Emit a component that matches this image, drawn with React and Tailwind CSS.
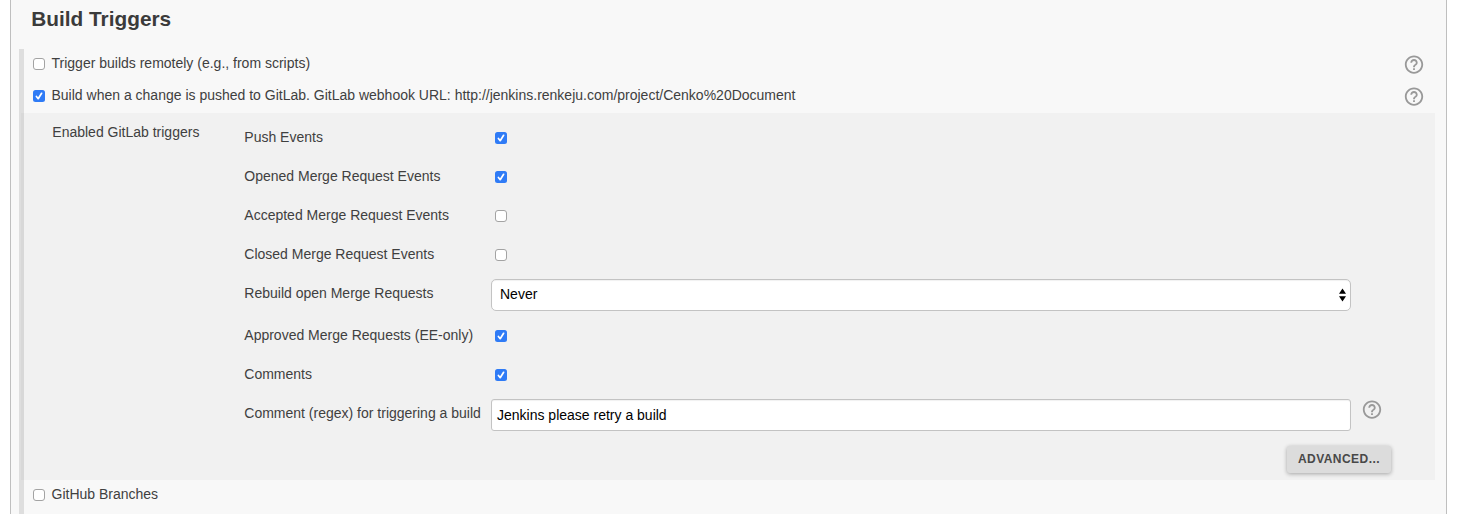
import React from "react";

function Check({ on }) {
  return (
    <span
      role="checkbox"
      aria-checked={on}
      className={
        on
          ? "block h-3 w-3 shrink-0 rounded-[2.5px] bg-[#2f7bf6]"
          : "block h-3 w-3 shrink-0 rounded-[3px] border border-[#a3a3a3] bg-white"
      }
    >
      {on && (
        <svg viewBox="0 0 12 12" className="block h-3 w-3" fill="none" stroke="#fff" strokeWidth="1.7" strokeLinecap="round" strokeLinejoin="round">
          <path d="M3.4 6.5 5.2 8.7 8.6 3.3" />
        </svg>
      )}
    </span>
  );
}

function Help() {
  return (
    <svg viewBox="0 0.5 24 24" className="block h-[22px] w-[22px] shrink-0" fill="#999">
      <path d="M11 18h2v-2h-2v2zm1-16C6.48 2 2 6.48 2 12s4.48 10 10 10 10-4.48 10-10S17.52 2 12 2zm0 18c-4.41 0-8-3.59-8-8s3.59-8 8-8 8 3.59 8 8-3.59 8-8 8zm0-14c-2.21 0-4 1.79-4 4h2c0-1.1.9-2 2-2s2 .9 2 2c0 2-3 1.75-3 5h2c0-2.25 3-2.5 3-5 0-2.21-1.79-4-4-4z" />
    </svg>
  );
}

function Option({ on, help, children }) {
  return (
    <div className="flex h-8 items-center pl-[9px] pr-[10.5px]">
      <span className="-mt-0.5">
        <Check on={on} />
      </span>
      <span className="-mt-1 ml-[6.5px] flex-1 whitespace-nowrap">{children}</span>
      {help && <Help />}
    </div>
  );
}

function Row({ label, on }) {
  return (
    <div className="flex h-[39px] items-center">
      <span className="-mt-px w-[251px] whitespace-nowrap pl-[0.3px]">{label}</span>
      <span className="mt-px">
        <Check on={on} />
      </span>
    </div>
  );
}

export default function App() {
  return (
    <div className="h-[514px] w-[1473px] overflow-hidden bg-white pl-[10px] font-['Liberation_Sans',Arial,sans-serif] text-[14px] leading-[20px] text-[#404040]">
      <div className="h-full w-[1437px] border-x border-[#bfbfbf] bg-[#f8f8f8] pl-2">
        <h2 className="h-[49px] pl-[12.3px] pt-[5px] text-[20.8px] font-bold leading-[28px] text-[#3b3b3b]">
          Build Triggers
        </h2>
        <div className="flex h-[465px] flex-col border-l-[5px] border-[#dedede] pr-[11px]">
          <Option help>Trigger builds remotely (e.g., from scripts)</Option>
          <Option on help>
            Build when a change is pushed to GitLab. GitLab webhook URL: http://jenkins.renkeju.com/project/Cenko%20Document
          </Option>
          <section className="-ml-[3px] flex h-[367px] border-l-[3px] border-[#d8d8d8] bg-[#f1f1f1] pt-[5px]">
            <div className="w-[220px] shrink-0 pl-[28.3px] pt-1">Enabled GitLab triggers</div>
            <div className="flex flex-1 flex-col">
              <Row label="Push Events" on />
              <Row label="Opened Merge Request Events" on />
              <Row label="Accepted Merge Request Events" />
              <Row label="Closed Merge Request Events" />
              <div className="flex h-[42px] pt-[5px]">
                <span className="w-[247px] pl-[0.3px] pt-1">Rebuild open Merge Requests</span>
                <div className="flex h-8 w-[860px] items-center justify-between rounded-[5px] border border-[#c3c3c3] bg-white pb-0.5 pl-2 pr-[3px] text-black shadow-[inset_0_1px_1px_rgba(0,0,0,0.06)]">
                  <span>Never</span>
                  <svg viewBox="0 0 9 14" className="mt-px h-[14px] w-[9px]" fill="#000">
                    <path d="M1 5.8 4.5.6 8 5.8zM1 8.2h7L4.5 13.4z" />
                  </svg>
                </div>
              </div>
              <Row label="Approved Merge Requests (EE-only)" on />
              <Row label="Comments" on />
              <div className="flex h-[52px] pt-[5px]">
                <span className="w-[247px] whitespace-nowrap pl-[0.3px] pt-1">Comment (regex) for triggering a build</span>
                <div className="flex h-8 w-[860px] items-center rounded-[3px] border border-[#c3c3c3] bg-white pl-[5px] text-black shadow-[inset_0_1px_1px_rgba(0,0,0,0.06)]">
                  Jenkins please retry a build
                </div>
                <div className="ml-[10px]">
                  <Help />
                </div>
              </div>
              <button className="ml-[1043px] flex h-[27px] w-[104px] items-center justify-center rounded-[3px] bg-[#dcdcdc] pb-px text-[12px] font-bold tracking-[0.45px] text-[#484848] shadow-[0_1px_4px_rgba(0,0,0,0.32)]">
                ADVANCED...
              </button>
            </div>
          </section>
          <Option>GitHub Branches</Option>
        </div>
      </div>
    </div>
  );
}
